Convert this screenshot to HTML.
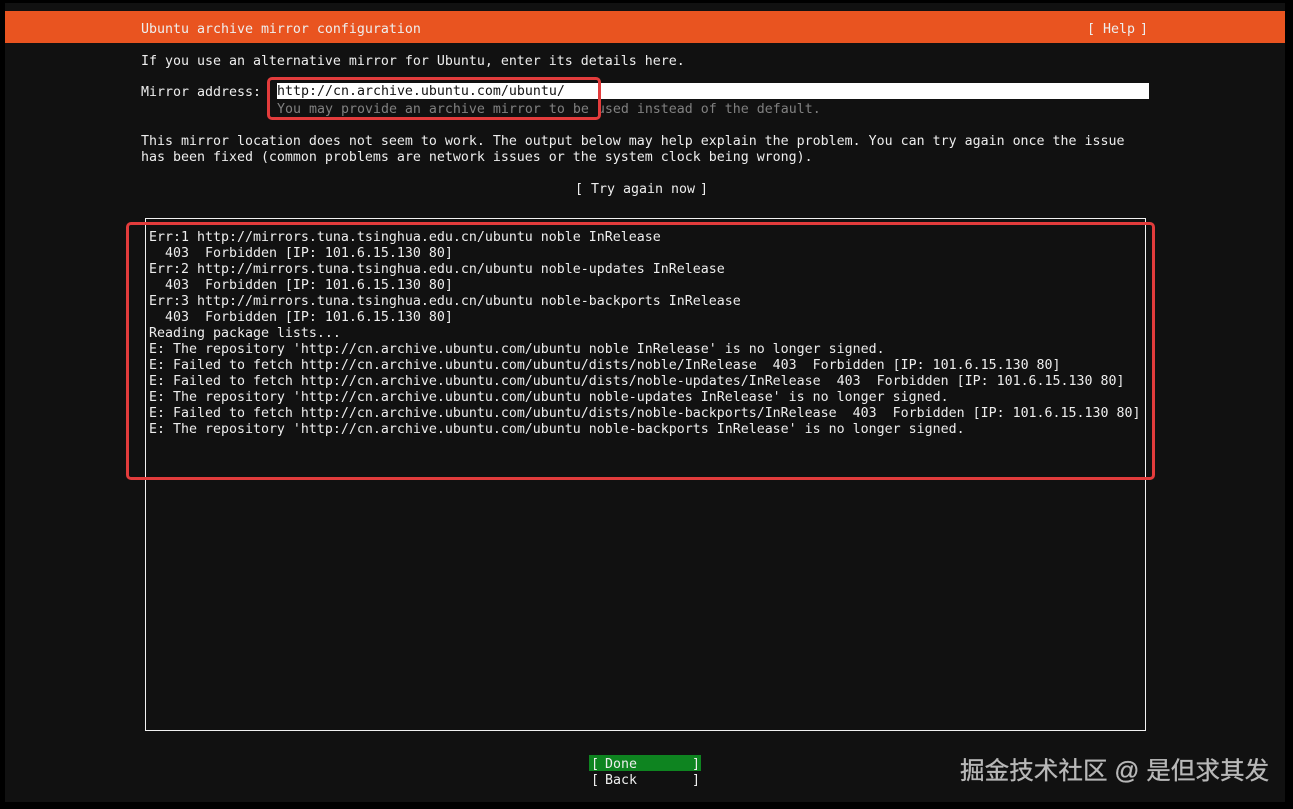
<!DOCTYPE html>
<html><head><meta charset="utf-8"><style>
html,body{margin:0;padding:0;background:#000}
#s{position:relative;width:1293px;height:809px;overflow:hidden;background:#000}
#bg{position:absolute;left:5px;top:3px;width:1280px;height:799px;background:#111}
#bar{position:absolute;left:5px;top:11px;width:1280px;height:32px;background:#e95420}
.t{position:absolute;font:13.29px/16px "DejaVu Sans Mono","Liberation Mono",monospace;color:#eee;white-space:pre;height:16px;margin-top:2px}
.b{position:relative;left:-3px}
.d{position:relative;left:-2px}
.r{position:absolute;border:3px solid #e33c3c;border-radius:5px;box-sizing:border-box}
</style></head><body><div id="s">
<div id="bg"></div><div id="bar"></div>
<div class="t" style="left:141px;top:20px">Ubuntu archive mirror configuration</div>
<div class="t" style="left:1087px;top:20px">[ Help <span class="b">]</span></div>
<div class="t" style="left:141px;top:52px">If you use an alternative mirror for Ubuntu, enter its details here.</div>
<div class="t" style="left:141px;top:83px">Mirror address:</div>
<div style="position:absolute;left:277px;top:83px;width:872px;height:16px;background:#fff"></div>
<div class="t" style="left:277px;top:82px;color:#111">http://cn.archive.ubuntu.com/ubuntu/</div>
<div class="t" style="left:277px;top:100px;color:#808080">You may provide an archive mirror to be used instead of the default.</div>
<div class="t" style="left:141px;top:132px">This mirror location does not seem to work. The output below may help explain the problem. You can try again once the issue</div>
<div class="t" style="left:141px;top:148px">has been fixed (common problems are network issues or the system clock being wrong).</div>
<div class="t" style="left:575px;top:180px">[ Try again now <span class="b">]</span></div>
<div style="position:absolute;left:145px;top:218px;width:1001px;height:513px;box-sizing:border-box;border:1px solid #f2f2f2"></div>
<div class="t" style="left:149px;top:228px">Err:1 http://mirrors.tuna.tsinghua.edu.cn/ubuntu noble InRelease</div>
<div class="t" style="left:149px;top:244px">  403  Forbidden [IP: 101.6.15.130 80]</div>
<div class="t" style="left:149px;top:260px">Err:2 http://mirrors.tuna.tsinghua.edu.cn/ubuntu noble-updates InRelease</div>
<div class="t" style="left:149px;top:276px">  403  Forbidden [IP: 101.6.15.130 80]</div>
<div class="t" style="left:149px;top:292px">Err:3 http://mirrors.tuna.tsinghua.edu.cn/ubuntu noble-backports InRelease</div>
<div class="t" style="left:149px;top:308px">  403  Forbidden [IP: 101.6.15.130 80]</div>
<div class="t" style="left:149px;top:324px">Reading package lists...</div>
<div class="t" style="left:149px;top:340px">E: The repository 'http://cn.archive.ubuntu.com/ubuntu noble InRelease' is no longer signed.</div>
<div class="t" style="left:149px;top:356px">E: Failed to fetch http://cn.archive.ubuntu.com/ubuntu/dists/noble/InRelease  403  Forbidden [IP: 101.6.15.130 80]</div>
<div class="t" style="left:149px;top:372px">E: Failed to fetch http://cn.archive.ubuntu.com/ubuntu/dists/noble-updates/InRelease  403  Forbidden [IP: 101.6.15.130 80]</div>
<div class="t" style="left:149px;top:388px">E: The repository 'http://cn.archive.ubuntu.com/ubuntu noble-updates InRelease' is no longer signed.</div>
<div class="t" style="left:149px;top:404px">E: Failed to fetch http://cn.archive.ubuntu.com/ubuntu/dists/noble-backports/InRelease  403  Forbidden [IP: 101.6.15.130 80]</div>
<div class="t" style="left:149px;top:420px">E: The repository 'http://cn.archive.ubuntu.com/ubuntu noble-backports InRelease' is no longer signed.</div>
<div style="position:absolute;left:589px;top:755px;width:112px;height:16px;background:#0e8420"></div>
<div class="t" style="left:591px;top:755px">[ <span class="d">Done</span>       <span class="b">]</span></div>
<div class="t" style="left:591px;top:771px">[ <span class="d">Back</span>       <span class="b">]</span></div>
<div class="r" style="left:267px;top:77px;width:334px;height:43px"></div>
<div class="r" style="left:126px;top:222px;width:1029px;height:258px"></div>
<div style="position:absolute;left:960px;top:755px;font:24.6px/34px 'Liberation Sans','Noto Sans CJK SC',sans-serif;color:#b8b8b8;-webkit-text-stroke:.3px #b8b8b8;white-space:pre">掘金技术社区 @ 是但求其发</div>
</div></body></html>
